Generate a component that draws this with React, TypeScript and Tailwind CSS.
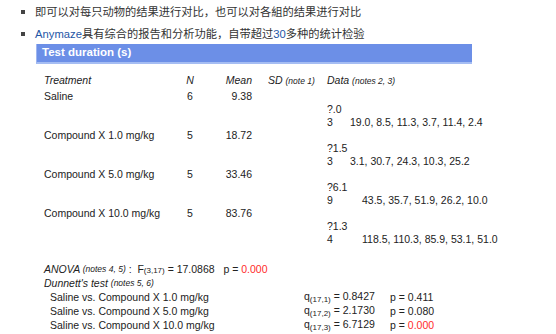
import React from "react";

type Row = {
  name: string;
  n: string;
  mean: string;
  sd: string;
  count: string;
  values: string;
  gap: string;
};

const rows: Row[] = [
  { name: "Saline", n: "6", mean: "9.38", sd: "?.0", count: "3", values: "19.0, 8.5, 11.3, 3.7, 11.4, 2.4", gap: "w-[23px]" },
  { name: "Compound X 1.0 mg/kg", n: "5", mean: "18.72", sd: "?1.5", count: "3", values: "3.1, 30.7, 24.3, 10.3, 25.2", gap: "w-[23px]" },
  { name: "Compound X 5.0 mg/kg", n: "5", mean: "33.46", sd: "?6.1", count: "9", values: "43.5, 35.7, 51.9, 26.2, 10.0", gap: "w-[35px]" },
  { name: "Compound X 10.0 mg/kg", n: "5", mean: "83.76", sd: "?1.3", count: "4", values: "118.5, 110.3, 85.9, 53.1, 51.0", gap: "w-[35px]" },
];

const dunnett = [
  { label: "Saline vs. Compound X 1.0 mg/kg", sub: "(17,1)", q: "0.8427", p: "0.411", red: false },
  { label: "Saline vs. Compound X 5.0 mg/kg", sub: "(17,2)", q: "2.1730", p: "0.080", red: false },
  { label: "Saline vs. Compound X 10.0 mg/kg", sub: "(17,3)", q: "6.7129", p: "0.000", red: true },
];

const cjk = { fontFamily: '"Liberation Sans", "Noto Sans CJK SC", sans-serif' };

export default function App() {
  return (
    <div className="w-[556px] h-[334px] bg-white overflow-hidden text-[#222]" style={{ fontFamily: '"Liberation Sans", Arial, sans-serif' }}>
      <ul className="pt-[1px]" style={cjk}>
        <li className="flex items-center h-[22px] text-[11.25px] text-[#333]">
          <span className="w-[4px] h-[4px] bg-[#444] ml-[21px] mr-[10px]" />
          即可以对每只动物的结果进行对比，也可以对各組的结果进行对比
        </li>
        <li className="flex items-center h-[22px] text-[11.25px] text-[#333]">
          <span className="w-[4px] h-[4px] bg-[#444] ml-[21px] mr-[10px]" />
          <span className="text-[#2456a6]">Anymaze</span>具有综合的报告和分析功能，自带超过<span className="text-[#2456a6]">30</span>多种的统计检验
        </li>
      </ul>

      <div className="ml-[36px] mt-[-1px] w-[436px] h-[20px] bg-[#6c8fe7] border-l border-l-[#9fb6f0] border-b-2 border-b-[#a5bdf3] flex items-center pl-[5px] text-white font-bold text-[11.5px]">
        Test duration (s)
      </div>

      <div className="ml-[44px] mt-[9px] text-[10.5px]">
        <div className="grid grid-cols-[136px_20px_52px_75px_1fr] h-[15px] items-center italic">
          <span>Treatment</span>
          <span className="text-center">N</span>
          <span className="text-right">Mean</span>
          <span className="pl-[16px]">
            SD <span className="text-[8.5px]">(note 1)</span>
          </span>
          <span>
            Data <span className="text-[8.5px]">(notes 2, 3)</span>
          </span>
        </div>
        <div className="mt-[2px]">
          {rows.map((r) => (
            <div key={r.name} className="grid grid-cols-[136px_20px_52px_75px_1fr] leading-[13px]">
              <span>{r.name}</span>
              <span className="text-center">{r.n}</span>
              <span className="text-right">{r.mean}</span>
              <span />
              <div className="flex flex-col">
                <span className="h-[13px]" />
                <span>{r.sd}</span>
                <div className="flex">
                  <span className={r.gap}>{r.count}</span>
                  <span>{r.values}</span>
                </div>
              </div>
            </div>
          ))}
        </div>

        <div className="mt-[16px] leading-[14px]">
          <div className="flex items-center h-[14px] whitespace-pre">
            <span className="italic">ANOVA </span>
            <span className="italic text-[8.5px]">(notes 4, 5)</span>
            <span> :  F</span>
            <span className="text-[8px] relative top-[2px]">(3,17)</span>
            <span> = 17.0868   p = </span>
            <span className="text-[#ff2a2a]">0.000</span>
          </div>
          <div className="flex items-center h-[14px] whitespace-pre">
            <span className="italic">Dunnett's test </span>
            <span className="italic text-[8.5px]">(notes 5, 6)</span>
          </div>
          {dunnett.map((d) => (
            <div key={d.label} className="flex items-center h-[14px] whitespace-pre">
              <span className="pl-[6px] w-[260px]">{d.label}</span>
              <span className="w-[86px]">
                q<span className="text-[8px] relative top-[2px]">{d.sub}</span> = {d.q}
              </span>
              <span>
                p = <span className={d.red ? "text-[#ff2a2a]" : ""}>{d.p}</span>
              </span>
            </div>
          ))}
        </div>
      </div>
    </div>
  );
}
